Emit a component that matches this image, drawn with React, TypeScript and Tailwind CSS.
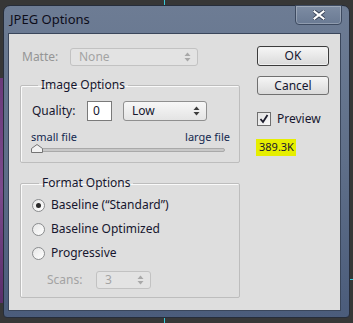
const ui = { fontFamily: '"Noto Sans", "Liberation Sans", sans-serif' };

function Arrows({ muted = false }: { muted?: boolean }) {
  const c = muted ? "#a8a8a8" : "#3c3c3c";
  return (
    <svg width="7" height="10" viewBox="0 0 7 10">
      <path d="M3.5 0.5 L6.5 4 L0.5 4 Z" fill={c} />
      <path d="M0.5 6 L6.5 6 L3.5 9.5 Z" fill={c} />
    </svg>
  );
}

function Select({
  value,
  width,
  height = 18,
  disabled = false,
}: {
  value: string;
  width: string;
  height?: number;
  disabled?: boolean;
}) {
  return (
    <div
      className={`${width} flex items-center justify-between rounded-[3px] border pl-[8px] pr-[6px] ${
        disabled
          ? "border-[#c2c2c2] bg-[#e3e3e3] text-[#a3a3a3]"
          : "border-[#8f8f8f] bg-gradient-to-b from-[#f7f7f7] to-[#e4e4e4] text-[#16162e]"
      }`}
      style={{ height }}
    >
      <span className="leading-none">{value}</span>
      <Arrows muted={disabled} />
    </div>
  );
}

function Radio({ checked, label }: { checked?: boolean; label: string }) {
  return (
    <div className="flex h-[24px] items-center pl-[11px]">
      <div className="flex h-[13px] w-[13px] items-center justify-center rounded-full border border-[#8a8c8e] bg-gradient-to-br from-[#e6e6e6] to-[#ffffff]">
        {checked && <div className="h-[5px] w-[5px] rounded-full bg-[#2a2a2a]" />}
      </div>
      <span className="ml-[6px] text-[#16162e]">{label}</span>
    </div>
  );
}

export default function App() {
  return (
    <div className="relative h-[323px] w-[353px] overflow-hidden bg-[#373737] pl-[3px] pt-[5px] text-[12px]" style={ui}>
      {/* guide lines and background bits */}
      <div className="absolute left-[164px] top-0 h-[5px] w-px bg-[#38c8d8]" />
      <div className="absolute bottom-0 left-[164px] h-[5px] w-px bg-[#38c8d8]" />
      <div className="absolute right-0 top-[279px] h-px w-[3px] bg-[#38c8d8]" />
      <div className="absolute left-0 top-[78px] h-[225px] w-[3px] bg-gradient-to-b from-[#6a3a7a] via-[#7c4a8c] to-[#5a2e6a]" />

      {/* window */}
      <div className="flex h-[313px] w-[347px] flex-col rounded-b-[4px] rounded-t-[7px] border border-[#262d3a] bg-gradient-to-b from-[#6d7c94] via-[#5f6f89] to-[#4b5c7b]">
        {/* title bar */}
        <div className="flex h-[27px] items-start justify-between pr-[7px]">
          <span className="pl-[6px] pt-[7px] text-[13px] leading-none text-[#0d0d1a]">JPEG Options</span>
          <div className="-mt-px flex h-[20px] w-[47px] items-center justify-center rounded-b-[4px] border border-[#3d4a60] bg-gradient-to-b from-[#7d8ca3] to-[#6a7a93] shadow-[inset_0_0_0_1px_rgba(255,255,255,0.25)]">
            <svg width="12" height="10" viewBox="0 0 12 10">
              <path d="M1.5 1.5 L10.5 8.5 M10.5 1.5 L1.5 8.5" stroke="#3a4458" strokeWidth="4" strokeLinecap="square" />
              <path d="M1.5 1.5 L10.5 8.5 M10.5 1.5 L1.5 8.5" stroke="#ffffff" strokeWidth="2.2" strokeLinecap="square" />
            </svg>
          </div>
        </div>

        {/* client */}
        <div className="ml-[4px] flex h-[278px] w-[333px] border border-[#3a465b] bg-[#dedede]">
          {/* left column */}
          <div className="ml-[11px] mt-[14px] flex w-[220px] flex-col">
            <div className="flex h-[18px] items-center pl-[2px]">
              <span className="w-[48px] text-[#959595]">Matte:</span>
              <Select value="None" width="w-[128px]" disabled />
            </div>

            <fieldset className="mt-[11px] h-[86px] rounded-[2px] border border-[#bdbdbd] shadow-[inset_1px_1px_0_#fafafa]">
              <legend className="ml-[17px] h-[16px] px-[3px] leading-[16px] text-[#16162e]">Image Options</legend>
              <div className="mt-[8px] flex h-[20px] items-center pl-[11px]">
                <span className="w-[55px] shrink-0 text-[#16162e]">Quality:</span>
                <div className="flex h-[20px] w-[25px] shrink-0 items-center border border-[#7a7a7a] bg-white pl-[5px] text-[#16162e]">0</div>
                <div className="ml-[11px]">
                  <Select value="Low" width="w-[84px]" height={20} />
                </div>
              </div>
              <div className="mt-[9px] flex h-[13px] items-center justify-between pl-[10px] pr-[9px] text-[11px] leading-none text-[#13284f]">
                <span>small file</span>
                <span>large file</span>
              </div>
              <div className="relative ml-[10px] mt-px h-[9px] w-[205px]">
                <div className="absolute left-[2px] top-[4px] h-[4px] w-[192px] rounded-[2px] border border-[#a9a9a9] bg-[#c8c8c8]" />
                <svg className="absolute left-0 top-0" width="12" height="9" viewBox="0 0 12 9">
                  <path d="M0.5 8.5 L0.5 4.5 L6 0.5 L11.5 4.5 L11.5 8.5 Z" fill="#f2f2f2" stroke="#747474" />
                </svg>
              </div>
            </fieldset>

            <fieldset className="mt-[12px] h-[123px] rounded-[2px] border border-[#bdbdbd] shadow-[inset_1px_1px_0_#fafafa]">
              <legend className="ml-[18px] h-[16px] px-[3px] leading-[16px] text-[#16162e]">Format Options</legend>
              <div className="mt-[2px]">
                <Radio checked label={"Baseline (\u201CStandard\u201D)"} />
                <Radio label="Baseline Optimized" />
                <Radio label="Progressive" />
              </div>
              <div className="mt-[6px] flex h-[18px] items-center pl-[26px]">
                <span className="w-[49px] text-[#a3a3a3]">Scans:</span>
                <Select value="3" width="w-[55px]" disabled />
              </div>
            </fieldset>
          </div>

          {/* right column */}
          <div className="ml-[17px] mt-[12px] flex w-[72px] flex-col text-[#16162e]">
            <div className="flex h-[20px] items-center justify-center rounded-[3px] border border-[#3c3c3c] bg-gradient-to-b from-[#f6f6f6] to-[#dadada] shadow-[inset_0_0_0_1px_#f0f0f0]">OK</div>
            <div className="mt-[10px] flex h-[19px] items-center justify-center rounded-[3px] border border-[#707070] bg-gradient-to-b from-[#f6f6f6] to-[#dadada]">Cancel</div>
            <div className="mt-[16px] flex h-[16px] items-center">
              <div className="flex h-[14px] w-[14px] items-center justify-center border border-[#6f6f6f] bg-gradient-to-br from-[#e2e2e2] to-[#fafafa]">
                <svg width="10" height="10" viewBox="0 0 10 10">
                  <path d="M1.5 5 L4 8 L8.5 1" fill="none" stroke="#1c1c2c" strokeWidth="1.8" />
                </svg>
              </div>
              <span className="ml-[6px]">Preview</span>
            </div>
            <div className="-ml-px mt-[12px] flex h-[17px] w-[40px] items-center bg-[#e6ee00] pl-[3px] text-[11px] text-[#16162e]">389.3K</div>
          </div>
        </div>
      </div>
    </div>
  );
}
